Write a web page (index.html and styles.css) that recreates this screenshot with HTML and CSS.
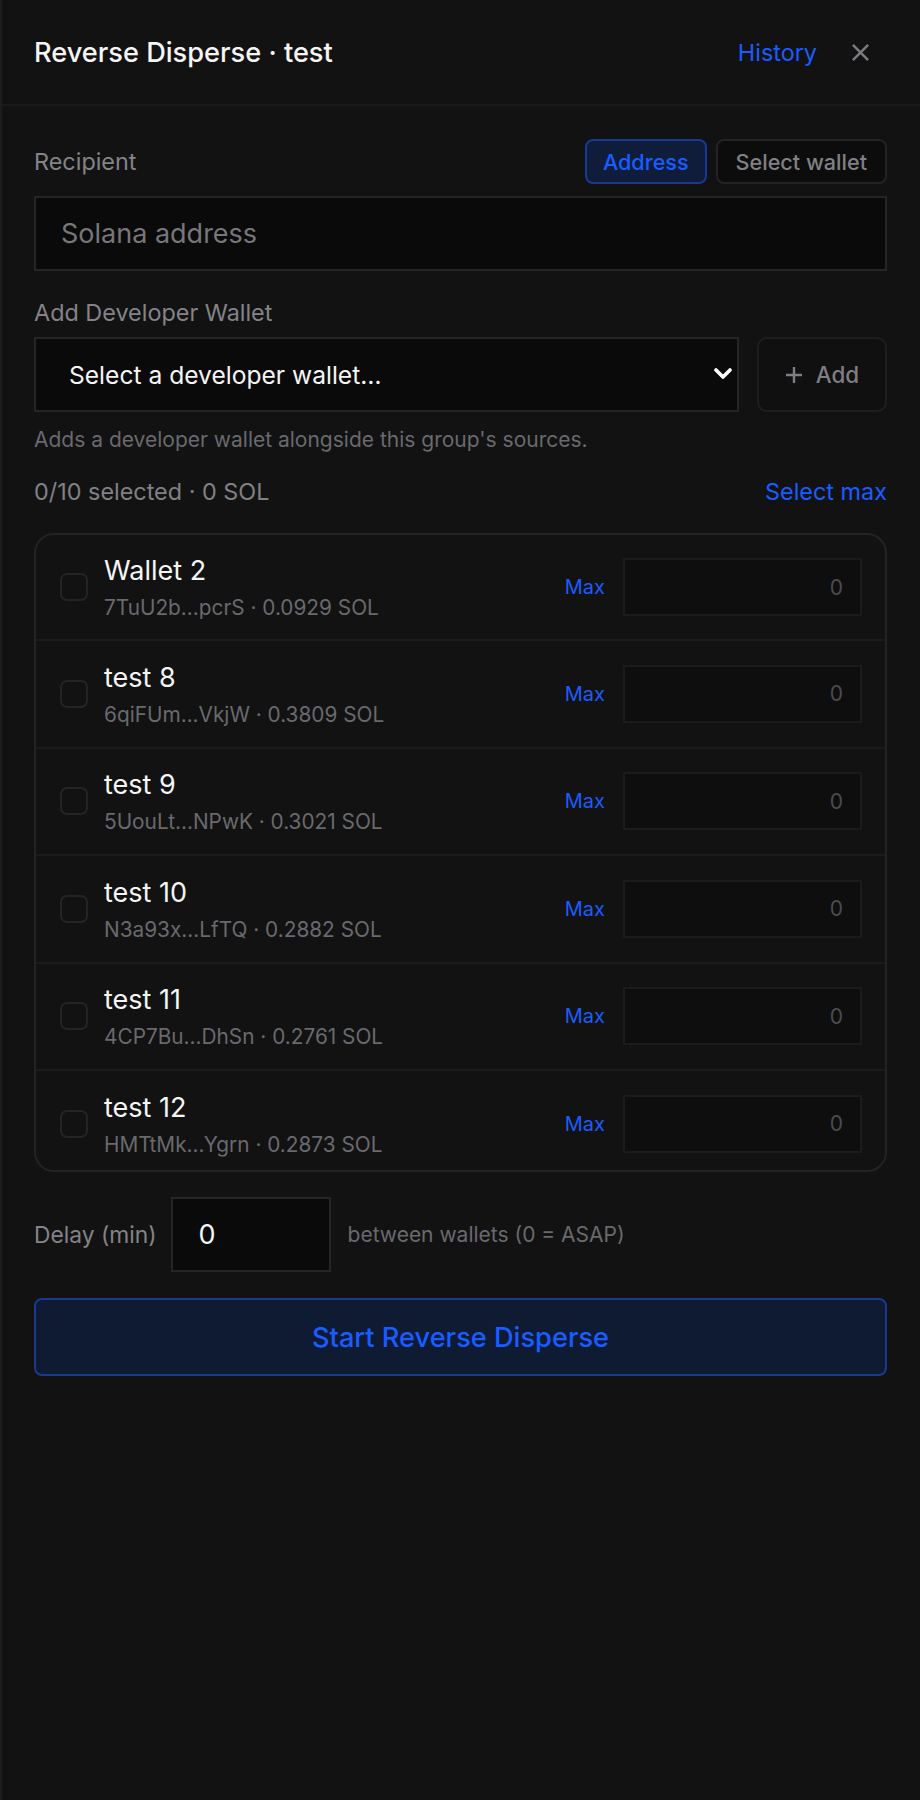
FILE: index.html
```html
<!DOCTYPE html>
<html lang="en">
<head>
    <meta charset="UTF-8">
    <meta name="viewport" content="width=device-width, initial-scale=1.0">
    <title>Reverse Disperse</title>
    <link rel="stylesheet" href="styles.css">
</head>
<body>
    <div class="panel">
        <header class="panel-head">
            <h1 class="title">Reverse Disperse · test</h1>
            <div class="head-actions">
                <a class="link" href="#">History</a>
                <button class="close-btn" aria-label="Close">
                    <svg viewBox="0 0 20 20" width="20" height="20"><path d="M2 2 L18 18 M18 2 L2 18" /></svg>
                </button>
            </div>
        </header>

        <div class="panel-body">
            <div class="field-head">
                <span class="label">Recipient</span>
                <div class="toggle">
                    <button class="seg active">Address</button>
                    <button class="seg">Select wallet</button>
                </div>
            </div>
            <input class="text-input" type="text" placeholder="Solana address">

            <div class="label label-block">Add Developer Wallet</div>
            <div class="dev-row">
                <div class="select-wrap">
                    <select class="dev-select">
                        <option>Select a developer wallet…</option>
                    </select>
                    <svg class="chevron" viewBox="0 0 20 12" width="20" height="12"><path d="M3 2 L10 9 L17 2" /></svg>
                </div>
                <button class="add-btn">
                    <svg viewBox="0 0 18 18" width="18" height="18"><path d="M9 1 V17 M1 9 H17" /></svg>
                    Add
                </button>
            </div>
            <p class="hint">Adds a developer wallet alongside this group's sources.</p>

            <div class="summary">
                <span>0/10 selected · 0 SOL</span>
                <a class="link" href="#">Select max</a>
            </div>

            <ul class="wallet-list">
                <li class="wallet">
                    <span class="check"></span>
                    <div class="wallet-info">
                        <div class="wallet-name">Wallet 2</div>
                        <div class="wallet-meta">7TuU2b...pcrS · 0.0929 SOL</div>
                    </div>
                    <a class="max-link" href="#">Max</a>
                    <input class="amount" type="text" placeholder="0">
                </li>
                <li class="wallet">
                    <span class="check"></span>
                    <div class="wallet-info">
                        <div class="wallet-name">test 8</div>
                        <div class="wallet-meta">6qiFUm...VkjW · 0.3809 SOL</div>
                    </div>
                    <a class="max-link" href="#">Max</a>
                    <input class="amount" type="text" placeholder="0">
                </li>
                <li class="wallet">
                    <span class="check"></span>
                    <div class="wallet-info">
                        <div class="wallet-name">test 9</div>
                        <div class="wallet-meta">5UouLt...NPwK · 0.3021 SOL</div>
                    </div>
                    <a class="max-link" href="#">Max</a>
                    <input class="amount" type="text" placeholder="0">
                </li>
                <li class="wallet">
                    <span class="check"></span>
                    <div class="wallet-info">
                        <div class="wallet-name">test 10</div>
                        <div class="wallet-meta">N3a93x...LfTQ · 0.2882 SOL</div>
                    </div>
                    <a class="max-link" href="#">Max</a>
                    <input class="amount" type="text" placeholder="0">
                </li>
                <li class="wallet">
                    <span class="check"></span>
                    <div class="wallet-info">
                        <div class="wallet-name">test 11</div>
                        <div class="wallet-meta">4CP7Bu...DhSn · 0.2761 SOL</div>
                    </div>
                    <a class="max-link" href="#">Max</a>
                    <input class="amount" type="text" placeholder="0">
                </li>
                <li class="wallet">
                    <span class="check"></span>
                    <div class="wallet-info">
                        <div class="wallet-name">test 12</div>
                        <div class="wallet-meta">HMTtMk...Ygrn · 0.2873 SOL</div>
                    </div>
                    <a class="max-link" href="#">Max</a>
                    <input class="amount" type="text" placeholder="0">
                </li>
            </ul>

            <div class="delay-row">
                <span class="label">Delay (min)</span>
                <input class="delay-input" type="text" value="0">
                <span class="delay-note">between wallets (0 = ASAP)</span>
            </div>

            <button class="start-btn">Start Reverse Disperse</button>
        </div>
    </div>
</body>
</html>
```

FILE: styles.css
```css
* {
    box-sizing: border-box;
}
body {
    margin: 0;
    background: #121212;
    font-family: "Inter", "Liberation Sans", sans-serif;
    color: #f2f2f2;
}
button, input, select {
    font-family: inherit;
}
.panel {
    min-height: 1800px;
    background: #121212;
    border-left: 2px solid #1d1d1f;
}

/* header */
.panel-head {
    height: 106px;
    display: flex;
    align-items: center;
    justify-content: space-between;
    padding: 0 33px 0 32px;
    border-bottom: 2px solid #1a1a1a;
}
.title {
    margin: 0;
    font-size: 27.2px;
    font-weight: 500;
    color: #f5f5f5;
}
.head-actions {
    display: flex;
    align-items: center;
}
.link {
    color: #1a5cff;
    text-decoration: none;
    font-size: 23.4px;
}
.close-btn {
    background: none;
    border: none;
    padding: 0;
    margin-left: 34px;
    margin-right: 17px;
    display: flex;
}
.close-btn svg {
    width: 19px;
    height: 19px;
}
.close-btn path {
    stroke: #7c7c80;
    stroke-width: 2.6;
    fill: none;
}

/* body */
.panel-body {
    padding: 33px 33px 0 32px;
}
.label {
    font-size: 23.4px;
    line-height: 30px;
    color: #838388;
}
.field-head {
    display: flex;
    align-items: center;
    justify-content: space-between;
}
.toggle {
    display: flex;
    gap: 9px;
}
.seg {
    height: 45px;
    padding: 0 18px;
    border-radius: 8px;
    border: 2px solid #232326;
    background: #0c0c0c;
    color: #808085;
    font-size: 21.6px;
    font-weight: 500;
}
.seg.active {
    padding: 0 16px;
    background: #0f1c3a;
    border-color: #173b94;
    color: #1a5cff;
}
.text-input {
    display: block;
    width: 100%;
    height: 75px;
    margin-top: 12px;
    padding: 0 25px;
    background: #0a0a0a;
    border: 2px solid #252528;
    color: #f2f2f2;
    font-size: 27px;
    outline: none;
}
.text-input::placeholder {
    color: #77777b;
}
.label-block {
    margin-top: 27px;
}
.dev-row {
    display: flex;
    gap: 18px;
    margin-top: 9px;
}
.select-wrap {
    position: relative;
    flex: 1;
}
.dev-select {
    appearance: none;
    -webkit-appearance: none;
    width: 100%;
    height: 75px;
    padding: 0 60px 0 33px;
    background: #0a0a0a;
    border: 2px solid #252528;
    border-radius: 0;
    color: #f5f5f5;
    font-size: 24.6px;
    outline: none;
}
.chevron {
    position: absolute;
    right: 6px;
    top: 31px;
    width: 20px;
    height: 12px;
    pointer-events: none;
}
.chevron path {
    stroke: #ffffff;
    stroke-width: 3.6;
    fill: none;
    stroke-linecap: round;
    stroke-linejoin: round;
}
.add-btn {
    width: 130px;
    height: 75px;
    display: flex;
    align-items: center;
    justify-content: center;
    gap: 13px;
    background: #101010;
    border: 2px solid #1e1e20;
    border-radius: 10px;
    color: #7e7e83;
    font-size: 22.4px;
    font-weight: 500;
}
.add-btn svg {
    width: 18px;
    height: 18px;
}
.add-btn path {
    stroke: #7e7e83;
    stroke-width: 2.4;
    fill: none;
}
.hint {
    margin: 14px 0 0;
    font-size: 21px;
    line-height: 28px;
    color: #69696e;
}
.summary {
    display: flex;
    justify-content: space-between;
    align-items: center;
    margin-top: 23px;
    font-size: 23.4px;
    line-height: 30px;
    color: #808085;
}

/* wallet list */
.wallet-list {
    list-style: none;
    height: 639px;
    margin: 26px 0 0;
    padding: 0;
    border: 2px solid #232326;
    border-radius: 20px;
    overflow: hidden;
}
.wallet {
    display: flex;
    align-items: center;
    height: 107.5px;
    padding: 0 23px 0 24px;
    border-top: 2px solid #1b1b1d;
}
.wallet:first-child {
    height: 104px;
    border-top: 0;
}
.check {
    width: 28px;
    height: 28px;
    border: 2px solid #242427;
    border-radius: 7px;
    flex-shrink: 0;
}
.wallet-info {
    flex: 1;
    margin-left: 16px;
    margin-top: 3px;
}
.wallet-name {
    font-size: 27px;
    line-height: 32px;
    color: #f5f5f5;
}
.wallet-meta {
    margin-top: 7px;
    font-size: 20.8px;
    line-height: 28px;
    color: #69696e;
}
.max-link {
    color: #1a5cff;
    text-decoration: none;
    font-size: 20px;
    margin-right: 18px;
}
.amount {
    width: 239px;
    height: 58px;
    padding: 0 17px;
    background: #0e0e0e;
    border: 2px solid #1b1b1d;
    color: #f2f2f2;
    font-size: 21px;
    text-align: right;
    outline: none;
}
.amount::placeholder {
    color: #4c4c50;
}

/* delay + submit */
.delay-row {
    display: flex;
    align-items: center;
    margin-top: 25px;
}
.delay-row .label {
    font-size: 22.8px;
}
.delay-input {
    width: 160px;
    height: 75px;
    margin: 0 17px 0 14px;
    padding: 0 26px;
    background: #0a0a0a;
    border: 2px solid #252528;
    color: #f5f5f5;
    font-size: 27px;
    outline: none;
}
.delay-note {
    font-size: 21px;
    color: #69696e;
}
.start-btn {
    display: block;
    width: 100%;
    height: 78px;
    margin-top: 26px;
    background: #0f1a33;
    border: 2px solid #173b94;
    border-radius: 8px;
    color: #1a5cff;
    font-size: 27.2px;
    font-weight: 500;
}
```
